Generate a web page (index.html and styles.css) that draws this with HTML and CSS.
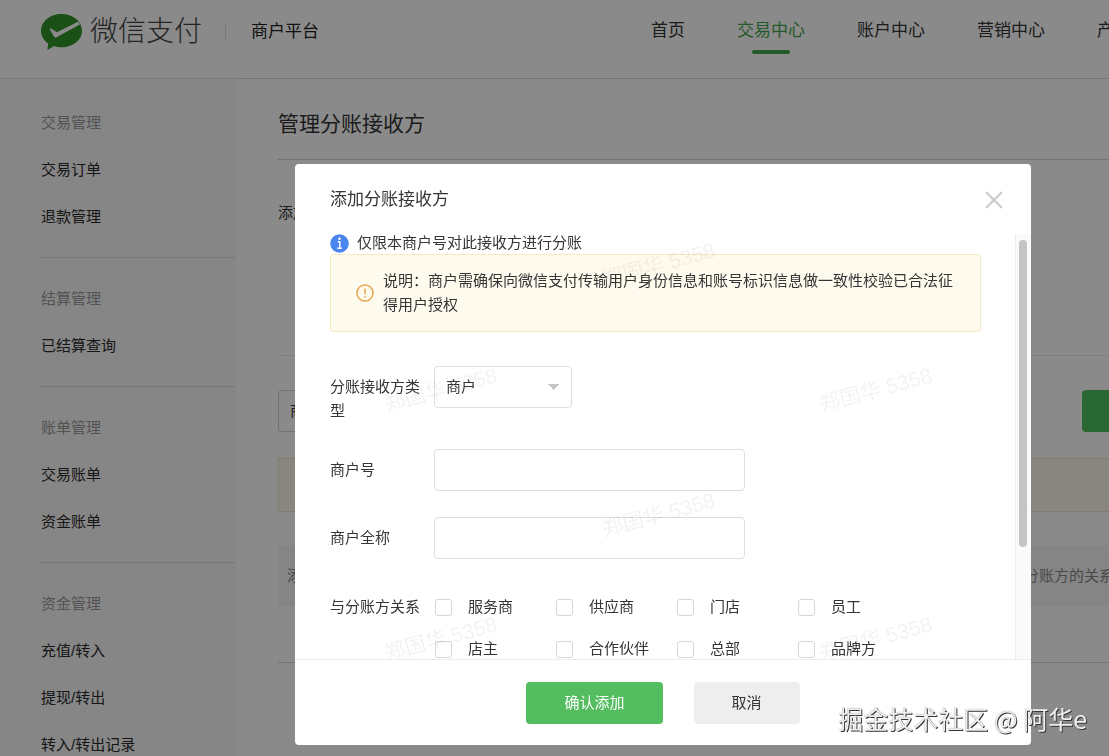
FILE: index.html
```html
<!DOCTYPE html>
<html lang="zh-CN">
<head>
<meta charset="utf-8">
<title>微信支付 商户平台</title>
<link rel="stylesheet" href="styles.css">
</head>
<body>
<div class="page">
  <header class="topbar">
    <a class="brand" href="#">
      <svg class="brand-icon" viewBox="0 0 40 37" aria-hidden="true">
        <path d="M20 1C9 1 0 8.300 0 17.400c0 5 2.700 9.400 7 12.400L6.300 36l6.400-3.800c2.300.8 4.700 1.200 7.300 1.200 11 0 20-7.200 20-16.200S31 1 20 1Z" fill="#30932a"/>
        <path d="M36 8.500 15.500 18.800 9.800 15.200c-.8-.5-1.400 0-1.100.9l3.900 6.900c.6 1 1.500 1.200 2.600.6L38.300 10.900Z" fill="#fff"/>
      </svg>
      <span class="brand-name">微信支付</span>
    </a>
    <span class="platform">商户平台</span>
    <nav class="nav">
      <a class="nav-link" href="#">首页</a>
      <a class="nav-link nav-link-active" href="#">交易中心</a>
      <a class="nav-link" href="#">账户中心</a>
      <a class="nav-link" href="#">营销中心</a>
      <a class="nav-link" href="#">产品中心</a>
    </nav>
  </header>
  <div class="columns">
    <aside class="sidebar">
      <section class="group">
        <h2 class="group-title">交易管理</h2>
        <a class="group-link" href="#">交易订单</a>
        <a class="group-link" href="#">退款管理</a>
      </section>
      <section class="group">
        <h2 class="group-title">结算管理</h2>
        <a class="group-link" href="#">已结算查询</a>
      </section>
      <section class="group">
        <h2 class="group-title">账单管理</h2>
        <a class="group-link" href="#">交易账单</a>
        <a class="group-link" href="#">资金账单</a>
      </section>
      <section class="group">
        <h2 class="group-title">资金管理</h2>
        <a class="group-link" href="#">充值/转入</a>
        <a class="group-link" href="#">提现/转出</a>
        <a class="group-link" href="#">转入/转出记录</a>
      </section>
    </aside>
    <main class="content">
      <h1 class="page-title">管理分账接收方</h1>
      <div class="summary">添加</div>
      <div class="toolbar">
        <select class="filter" aria-label="接收方类型"><option>商户</option></select>
        <button class="search" type="button" aria-label="查询"></button>
      </div>
      <div class="tip"></div>
      <table class="list">
        <thead><tr><th class="list-time">添加</th><th>与分账方的关系</th></tr></thead>
        <tbody><tr><td colspan="2"></td></tr></tbody>
      </table>
    </main>
  </div>
</div>

<div class="overlay">
  <div class="dialog" role="dialog" aria-labelledby="dialog-title">
    <div class="dialog-head">
      <h2 class="dialog-title" id="dialog-title">添加分账接收方</h2>
      <button class="close" type="button" aria-label="关闭">
        <svg viewBox="0 0 18 18" width="18" height="18"><path d="M1 1l16 16M17 1 1 17" stroke="#ccc" stroke-width="2.200" fill="none"/></svg>
      </button>
    </div>
    <div class="dialog-main">
      <form class="dialog-body" id="receiver">
        <p class="info">
          <svg class="info-icon" viewBox="0 0 19 19" aria-hidden="true"><circle cx="9.500" cy="9.500" r="9.300" fill="#4a86f0"/><circle cx="9.500" cy="4.800" r="1.300" fill="#fff"/><path d="M7.800 7.700h2v6.500M7.300 14.200h4.600" stroke="#fff" stroke-width="1.500" fill="none"/></svg>
          仅限本商户号对此接收方进行分账
        </p>
        <div class="notice">
          <svg class="notice-icon" viewBox="0 0 18 18" aria-hidden="true"><circle cx="9" cy="9" r="8" fill="none" stroke="#e9a64c" stroke-width="1.500"/><path d="M9 4.500v5.800M9 12v1.600" stroke="#e9a64c" stroke-width="1.500"/></svg>
          <p class="notice-text">说明：商户需确保向微信支付传输用户身份信息和账号标识信息做一致性校验已合法征得用户授权</p>
        </div>
        <div class="fields">
          <div class="field">
            <label class="field-label" for="type">分账接收方类型</label>
            <select class="type" id="type"><option>商户</option></select>
          </div>
          <div class="field">
            <label class="field-label" for="mch">商户号</label>
            <input class="text" id="mch" type="text">
          </div>
          <div class="field">
            <label class="field-label" for="name">商户全称</label>
            <input class="text" id="name" type="text">
          </div>
          <div class="field field-choices" role="group" aria-labelledby="relation">
            <span class="field-label" id="relation">与分账方关系</span>
            <div class="choices">
              <label class="choice"><input class="box" type="checkbox">服务商</label>
              <label class="choice"><input class="box" type="checkbox">供应商</label>
              <label class="choice"><input class="box" type="checkbox">门店</label>
              <label class="choice"><input class="box" type="checkbox">员工</label>
              <label class="choice"><input class="box" type="checkbox">店主</label>
              <label class="choice"><input class="box" type="checkbox">合作伙伴</label>
              <label class="choice"><input class="box" type="checkbox">总部</label>
              <label class="choice"><input class="box" type="checkbox">品牌方</label>
            </div>
          </div>
        </div>
      </form>
      <div class="scrollbar"><div class="thumb"></div></div>
      <div class="marks" aria-hidden="true">
        <span class="mark mark-mid mark-row1">郑国华 5358</span>
        <span class="mark mark-left mark-row2">郑国华 5358</span>
        <span class="mark mark-right mark-row2">郑国华 5358</span>
        <span class="mark mark-mid mark-row3">郑国华 5358</span>
        <span class="mark mark-left mark-row4">郑国华 5358</span>
        <span class="mark mark-right mark-row4">郑国华 5358</span>
      </div>
    </div>
    <div class="dialog-foot">
      <button class="btn btn-primary" type="submit" form="receiver">确认添加</button>
      <button class="btn btn-plain" type="button">取消</button>
    </div>
  </div>
</div>
<div class="credit">掘金技术社区 @ 阿华e</div>
</body>
</html>
```
FILE: styles.css
```css
* { box-sizing: border-box; }
body {
  margin: 0;
  overflow: hidden;
  font-family: "Liberation Sans", "Noto Sans CJK SC", sans-serif;
  font-size: 15px;
  line-height: 24px;
  color: #353535;
  background: #fff;
}
h1, h2, p { margin: 0; font-weight: 400; }
a { color: inherit; text-decoration: none; }
button, input, select { margin: 0; font: inherit; color: inherit; }

.page { display: flex; flex-direction: column; height: 100vh; overflow: hidden; }
.topbar {
  display: flex;
  align-items: flex-start;
  flex: none;
  height: 79px;
  padding: 13px 0 0 41px;
  border-bottom: 1px solid #dedede;
  white-space: nowrap;
  font-size: 17px;
}
.brand { display: flex; align-items: center; gap: 8px; height: 38px; padding-right: 23px; }
.brand-icon { width: 41px; height: 38px; }
.brand-name { font-size: 28px; line-height: 38px; font-weight: 300; color: #444; }
.platform {
  height: 20px;
  margin-top: 9px;
  padding-left: 25px;
  border-left: 1px solid #e4e4e4;
  line-height: 20px;
  color: #222;
}
.nav { display: flex; gap: 52px; margin: 6px 0 0 332px; }
.nav-link { display: flex; flex-direction: column; align-items: center; gap: 7px; }
.nav-link-active { color: #44a64c; }
.nav-link-active::after { content: ""; width: 38px; height: 4px; border-radius: 2px; background: #44a64c; }

.columns { display: flex; flex: 1; min-height: 0; }
.sidebar { flex: none; width: 236px; padding: 3px 0 0 40px; background: #f8f8f8; overflow: hidden; }
.group { padding: 17px 0; border-bottom: 1px solid #dcdcdc; }
.group-title, .group-link { display: block; padding-left: 1px; font-size: 15px; line-height: 47px; }
.group-title { color: #9a9a9a; }
.group-link { color: #2a2a2a; }

.content { flex: 1; min-width: 0; padding-left: 42px; overflow: hidden; }
.page-title { height: 81px; padding-top: 29px; border-bottom: 1px solid #d4d4d4; font-size: 21px; line-height: 32px; }
.summary { height: 196px; padding-top: 41px; border-bottom: 1px solid #ececec; }
.toolbar { display: flex; justify-content: space-between; padding-top: 34px; }
.filter {
  width: 138px;
  height: 42px;
  padding: 0 11px;
  appearance: none;
  border: 1px solid #d0d0d0;
  border-radius: 4px;
  background: #fff;
}
.search { width: 27px; height: 42px; border: 0; border-radius: 4px 0 0 4px; background: #4dc05d; }
.tip { height: 54px; margin: 26px 0 33px; border: 1px solid #eee6cc; border-right: 0; background: #fdf8ea; }
.list { width: 100%; border-collapse: collapse; table-layout: fixed; white-space: nowrap; color: #888; }
.list th { height: 61px; padding: 0; overflow: hidden; text-align: left; font-weight: 400; background: #f5f5f5; }
.list .list-time { width: 731px; padding-left: 9px; }
.list td { height: 56px; border-bottom: 1px solid #d4d4d4; }

.overlay {
  position: fixed;
  inset: 0;
  display: flex;
  align-items: flex-start;
  padding: 164px 78px 11px 295px;
  background: rgba(0, 0, 0, .46);
}
.dialog { flex: 1; min-width: 0; border-radius: 4px; background: #fff; overflow: hidden; }
.dialog-head { display: flex; align-items: center; justify-content: space-between; height: 68px; padding: 4px 28px 0 35px; }
.dialog-title { font-size: 17px; }
.close { display: flex; padding: 0; border: 0; background: none; }
.dialog-main { position: relative; display: flex; height: 427px; overflow: hidden; }
.dialog-body { flex: 1; min-width: 0; padding: 0 34px 0 35px; }
.info { display: flex; align-items: center; gap: 8px; height: 22px; }
.info-icon { width: 19px; height: 19px; }
.notice {
  display: flex;
  align-items: center;
  gap: 9px;
  padding: 14px 20px 14px 25px;
  border: 1px solid #f5ebc0;
  border-radius: 3px;
  background: #fefaee;
}
.notice-icon { flex: none; width: 18px; height: 18px; }
.fields { display: flex; flex-direction: column; gap: 26px; padding-top: 34px; }
.field { display: flex; align-items: flex-start; gap: 14px; }
.field-label { flex: none; width: 90px; padding-top: 9px; }
.field-choices { padding-top: 1px; }
.text, .type { height: 42px; padding: 0 11px; border: 1px solid #dedede; border-radius: 4px; background-color: #fff; }
.text { width: 311px; }
.type {
  width: 138px;
  appearance: none;
  background-image: linear-gradient(to bottom right, #c4c4c4 50%, transparent 50%), linear-gradient(to bottom left, #c4c4c4 50%, transparent 50%);
  background-repeat: no-repeat;
  background-size: 6px 6px;
  background-position: right 11px center, right 17px center;
}
.choices { display: grid; grid-template-columns: repeat(4, 121px); padding-left: 1px; }
.choice { display: flex; align-items: center; gap: 16px; height: 42px; white-space: nowrap; }
.box { appearance: none; width: 17px; height: 17px; border: 1px solid #d6d6d6; border-radius: 3px; background: #fff; }
.scrollbar { flex: none; width: 16px; margin-top: 2px; padding: 6px 0 0 3px; border-left: 1px solid #ececec; background: #fafafa; }
.thumb { width: 8px; height: 307px; border-radius: 4px; background: #c4c4c4; }

.marks { position: absolute; inset: 0; overflow: hidden; pointer-events: none; }
.mark { position: absolute; font-size: 21px; line-height: 24px; white-space: nowrap; color: rgba(0, 0, 0, .05); transform: rotate(-15deg); }
.mark-left { left: 88px; }
.mark-mid { left: 306px; }
.mark-right { left: 523px; }
.mark-row1 { top: 21px; }
.mark-row2 { top: 146px; }
.mark-row3 { top: 271px; }
.mark-row4 { top: 395px; }

.dialog-foot { display: flex; justify-content: center; gap: 31px; padding: 22px 0 21px; border-top: 1px solid #ececec; }
.btn { height: 42px; padding: 0 38px; border: 0; border-radius: 4px; }
.btn-primary { background: #54bd60; color: #fff; }
.btn-plain { background: #eee; }

.credit {
  position: fixed;
  right: 22px;
  bottom: 22px;
  font-family: "Noto Sans CJK SC", sans-serif;
  font-size: 25px;
  line-height: 32px;
  color: #eee;
  text-shadow: 1px 1px 0 #333, 0 0 1px #888;
}
```
